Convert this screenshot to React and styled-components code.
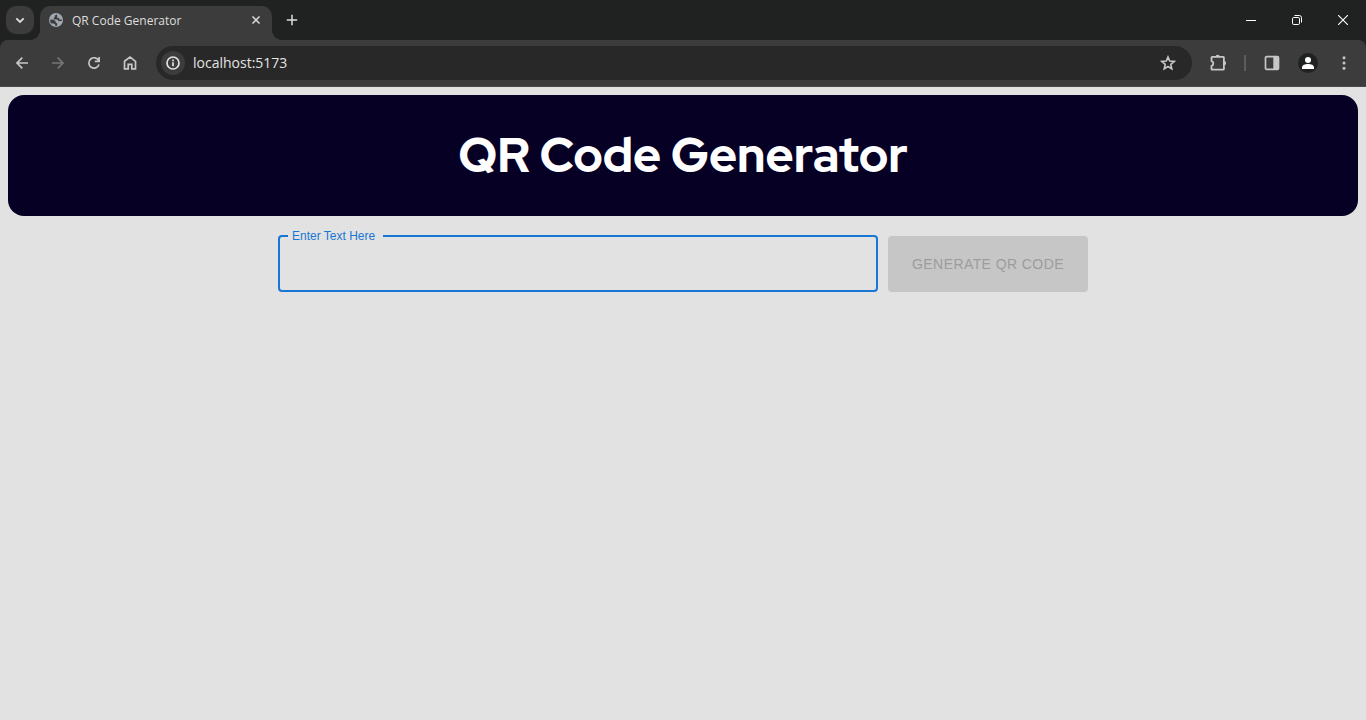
import React, { useState } from "react";
import styled, { createGlobalStyle } from "styled-components";

const GlobalStyle = createGlobalStyle`
  * { box-sizing: border-box; }
  body { margin: 0; background: #e2e2e2; font-family: "Liberation Sans", Arial, sans-serif; }
  #root { min-height: 100vh; }
  button { border: 0; padding: 0; background: none; color: inherit; font: inherit; }
`;

const TabStrip = styled.div`
  display: flex;
  align-items: center;
  height: 40px;
  padding-left: 6px;
  background: #202222;
  color: #dedede;
`;

const TabSearch = styled.button`
  display: grid;
  place-items: center;
  width: 28px;
  height: 28px;
  margin-right: 6px;
  border-radius: 10px;
  background: #3c3c3c;
`;

const Tab = styled.div`
  position: relative;
  align-self: flex-end;
  display: flex;
  align-items: center;
  width: 232px;
  height: 34px;
  padding: 0 6px 6px 9px;
  border-radius: 10px 10px 0 0;
  background: #3c3c3c;
  &::before, &::after {
    content: "";
    position: absolute;
    bottom: 0;
    width: 10px;
    height: 10px;
  }
  &::before { right: 100%; background: radial-gradient(circle at 0 0, transparent 10px, #3c3c3c 10px); }
  &::after { left: 100%; background: radial-gradient(circle at 100% 0, transparent 10px, #3c3c3c 10px); }
`;

const TabTitle = styled.span`
  flex: 1;
  margin-left: 9px;
  padding-top: 2px;
  font: 12px/16px "Segoe UI", "Open Sans", sans-serif;
  white-space: nowrap;
`;

const SmallButton = styled.button`
  display: grid;
  place-items: center;
  width: 20px;
  height: 20px;
`;

const NewTab = styled(SmallButton)`
  margin-left: 10px;
`;

const WindowControls = styled.div`
  display: flex;
  margin-left: auto;
  color: #fff;
`;

const WindowButton = styled.button`
  display: grid;
  place-items: center;
  width: 46px;
  height: 40px;
`;

const ToolbarBack = styled.div`
  background: #202222;
`;

const Toolbar = styled.div`
  display: flex;
  align-items: center;
  height: 47px;
  padding: 0 4px;
  border-bottom: 1px solid #484848;
  border-radius: 8px 8px 0 0;
  background: #3c3c3c;
  color: #c7c7c7;
`;

const ToolButton = styled.button`
  display: grid;
  place-items: center;
  width: 36px;
  height: 34px;
  &:disabled { color: #757575; }
`;

const AddressBar = styled.div`
  flex: 1;
  display: flex;
  align-items: center;
  height: 34px;
  margin: 0 8px;
  padding: 0 6px 0 5px;
  border-radius: 17px;
  background: #282828;
`;

const SiteInfo = styled.button`
  display: grid;
  place-items: center;
  width: 24px;
  height: 24px;
  border-radius: 50%;
  background: #3c3c3c;
  color: #e3e3e3;
`;

const Address = styled.input`
  flex: 1;
  min-width: 0;
  margin-left: 8px;
  padding: 0;
  border: 0;
  outline: 0;
  background: none;
  color: #e3e3e3;
  font: 14px/20px "Segoe UI", "Open Sans", sans-serif;
`;

const Divider = styled.span`
  width: 2px;
  height: 16px;
  margin: 0 8px;
  background: #5c5c5c;
`;

const Page = styled.main`
  padding: 8px;
`;

const Header = styled.header`
  padding: 28px 16px 29px;
  border-radius: 16px;
  background: #060025;
  color: #fff;
  text-align: center;
`;

const Title = styled.h1`
  margin: 0;
  font: 800 48px/64px "Red Hat Display", Inter, sans-serif;
`;

const Form = styled.form`
  display: flex;
  justify-content: center;
  align-items: flex-end;
  gap: 10px;
  margin-top: 13px;
`;

const Field = styled.fieldset`
  flex: 0 1 600px;
  min-width: 0;
  height: 63px;
  margin: 0;
  padding: 0 8px;
  border: 2px solid #1976d2;
  border-radius: 4px;
`;

const Legend = styled.legend`
  height: 14px;
  padding: 0 8px 0 4px;
  color: #1976d2;
  font-size: 12px;
  line-height: 14px;
`;

const TextInput = styled.input`
  display: block;
  width: 100%;
  height: 40px;
  padding: 0 4px;
  border: 0;
  outline: 0;
  background: none;
  color: #212121;
  font: 16px/24px "Liberation Sans", Arial, sans-serif;
`;

const Generate = styled.button`
  && {
    flex: 0 0 200px;
    height: 56px;
    border-radius: 4px;
    background: ${(p) => (p.disabled ? "#c6c6c6" : "#1976d2")};
    color: ${(p) => (p.disabled ? "#9c9c9c" : "#fff")};
    font-size: 14px;
    line-height: 24px;
    letter-spacing: 0.03em;
    text-transform: uppercase;
  }
`;

const Icon = ({ size = 16, width = 2, children }) => (
  <svg width={size} height={size} viewBox={`0 0 ${size} ${size}`} fill="none" stroke="currentColor" strokeWidth={width} aria-hidden="true">
    {children}
  </svg>
);

const GlobeIcon = () => (
  <Icon size={14} width={0}>
    <circle cx="7" cy="7" r="7" fill="#a1a7b0" />
    <path d="M7.6 1.3 5.800 2.700v1.500L4.400 5.200l1.100 1.200 3 .2.900 1.500h3.400l.1-1.400-2.400-.2-.8-1.700-1.800.2.400-2ZM1.300 6.600l3.400.2 1.800 1.500.2 1.300 1.500.8-.1 2.300-1.700.2-.3-1.600-1.700-.9-2.500-.2-.6-1.500Z" fill="#3c3c3c" />
  </Icon>
);

const PersonIcon = () => (
  <Icon size={20} width={0}>
    <circle cx="10" cy="10" r="10" fill="#202222" />
    <circle cx="10" cy="7" r="3" fill="#fff" />
    <path d="M4 16v-1.6C4 12.2 7 11 10 11s6 1.2 6 3.4V16Z" fill="#fff" />
  </Icon>
);

export default function App() {
  const [text, setText] = useState("");
  return (
    <>
      <GlobalStyle />
      <TabStrip>
        <TabSearch aria-label="Search tabs"><Icon size={10} width={1.8}><path d="m1.3 3.300 3.700 3.700 3.700-3.700" /></Icon></TabSearch>
        <Tab>
          <GlobeIcon />
          <TabTitle>QR Code Generator</TabTitle>
          <SmallButton aria-label="Close tab"><Icon size={10} width={1.5}><path d="m1.5 1.5 7 7m0-7-7 7" /></Icon></SmallButton>
        </Tab>
        <NewTab aria-label="New tab"><Icon size={12} width={1.5}><path d="M6 .8v10.4M.8 6h10.4" /></Icon></NewTab>
        <WindowControls>
          <WindowButton aria-label="Minimize"><Icon size={10} width={1}><path d="M0 5.5h10" /></Icon></WindowButton>
          <WindowButton aria-label="Restore">
            <Icon size={10} width={1}>
              <rect x=".5" y="2.5" width="7" height="7" rx="1.3" />
              <path d="M2.500 .5h4.800A2.200 2.200 0 0 1 9.500 2.700V7.500" />
            </Icon>
          </WindowButton>
          <WindowButton aria-label="Close window"><Icon size={10} width={1.1}><path d="m0 0 10 10M10 0 0 10" /></Icon></WindowButton>
        </WindowControls>
      </TabStrip>
      <ToolbarBack>
        <Toolbar>
          <ToolButton aria-label="Back"><Icon width={1.7}><path d="M14 8H3.300M8.300 2.700 3 8l5.300 5.300" /></Icon></ToolButton>
          <ToolButton aria-label="Forward" disabled><Icon width={1.7}><path d="M2 8h10.700M7.700 2.700 13 8l-5.300 5.300" /></Icon></ToolButton>
          <ToolButton aria-label="Reload"><Icon width={1.7}><path d="M12.800 5.800A5.200 5.200 0 1 0 13 9.600M13.100 2v4.300H8.800" /></Icon></ToolButton>
          <ToolButton aria-label="Home"><Icon width={1.7}><path d="M2.500 6.300 8 2.100l5.500 4.200v7.600H9.800V9.300H6.200v4.600H2.500Z" /></Icon></ToolButton>
          <AddressBar>
            <SiteInfo aria-label="Site information">
              <Icon width={1.7}><circle cx="8" cy="8" r="6" /><path d="M8 7.200v4M8 4.500v1.700" /></Icon>
            </SiteInfo>
            <Address aria-label="Address" defaultValue="localhost:5173" />
            <ToolButton aria-label="Bookmark this page">
              <Icon width={1.6}><path d="m8 2 1.700 4.100 4.500.4-3.400 2.900 1 4.400L8 11.500l-3.800 2.300 1-4.400-3.400-2.900 4.500-.4Z" /></Icon>
            </ToolButton>
          </AddressBar>
          <ToolButton aria-label="Extensions">
            <Icon size={18} width={1.8}>
              <path d="M2.500 3.500q0-.6.600-.6h11.200q.6 0 .6.600v11.600q0 .6-.6.600H3.100q-.6 0-.6-.6v-3.300c2.400-.6 2.400-4.100 0-4.700Z" strokeLinejoin="round" />
              <path d="M6.600 2.900a2.100 2.100 0 0 1 4.200 0ZM15 7.100a2.100 2.100 0 0 1 0 4.200Z" fill="currentColor" stroke="none" />
            </Icon>
          </ToolButton>
          <Divider />
          <ToolButton aria-label="Side panel">
            <Icon width={1.7}>
              <rect x="1.5" y="1.7" width="13" height="12.6" rx="1" />
              <path d="M9.300 2h5v12h-5Z" fill="currentColor" stroke="none" />
            </Icon>
          </ToolButton>
          <ToolButton aria-label="Profile"><PersonIcon /></ToolButton>
          <ToolButton aria-label="Browser menu">
            <Icon width={0}>
              <circle cx="8" cy="2.7" r="1.5" fill="currentColor" />
              <circle cx="8" cy="8" r="1.5" fill="currentColor" />
              <circle cx="8" cy="13.3" r="1.5" fill="currentColor" />
            </Icon>
          </ToolButton>
        </Toolbar>
      </ToolbarBack>
      <Page>
        <Header><Title>QR Code Generator</Title></Header>
        <Form onSubmit={(e) => e.preventDefault()}>
          <Field>
            <Legend><label htmlFor="qr-text">Enter Text Here</label></Legend>
            <TextInput id="qr-text" value={text} onChange={(e) => setText(e.target.value)} />
          </Field>
          <Generate type="submit" disabled={!text}>Generate QR Code</Generate>
        </Form>
      </Page>
    </>
  );
}
